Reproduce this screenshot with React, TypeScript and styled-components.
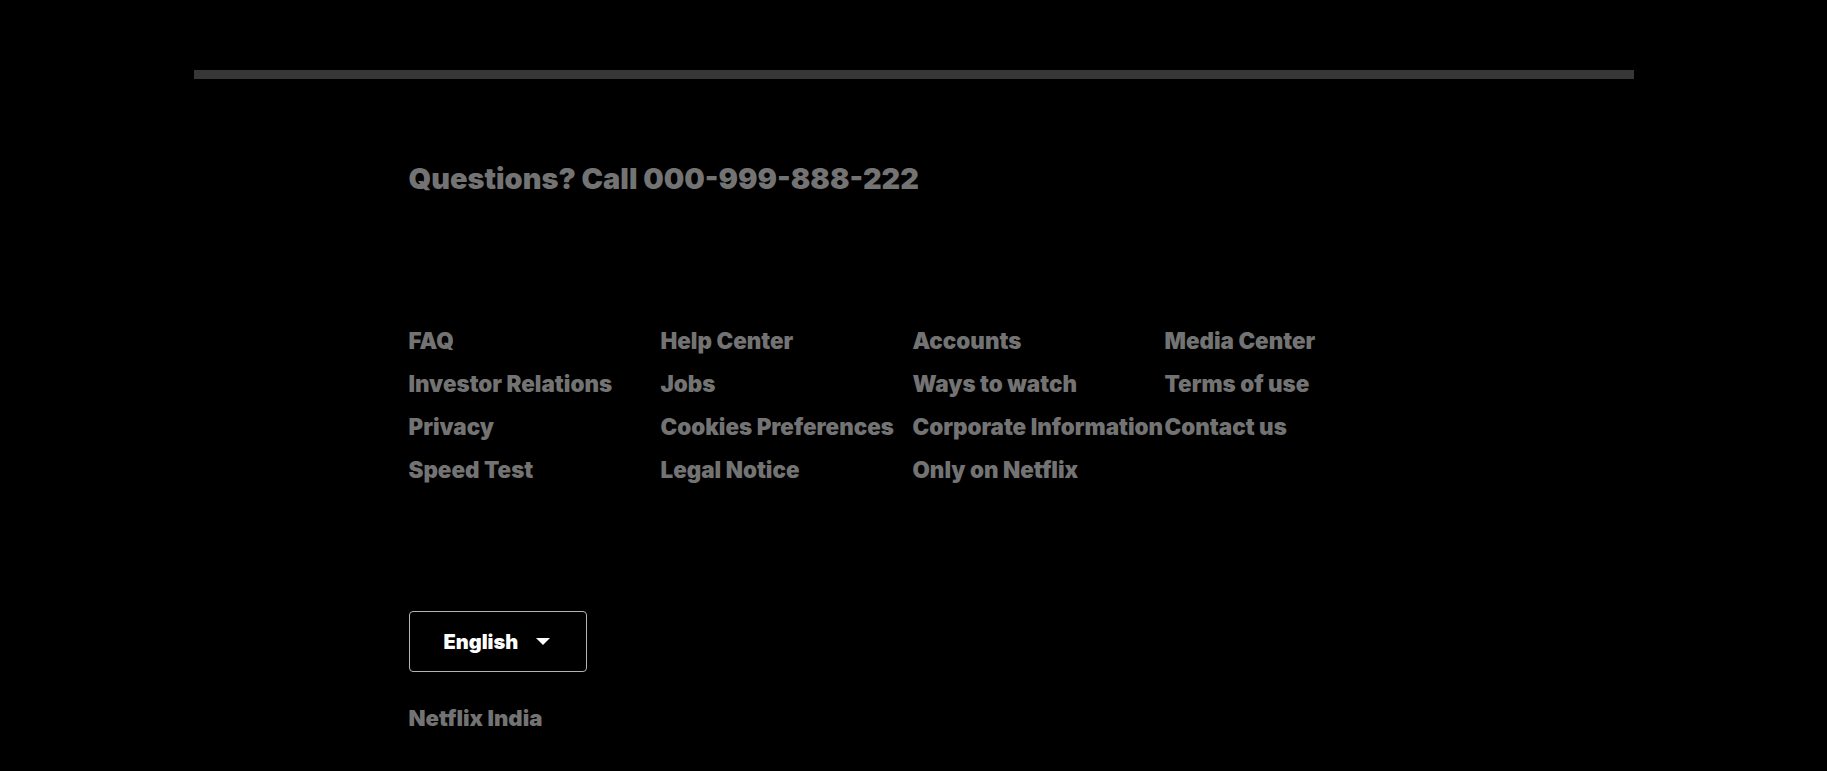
import React from "react";
import styled, { createGlobalStyle } from "styled-components";

const Global = createGlobalStyle`
  html, body {
    margin: 0;
    padding: 0;
    background: #000;
  }
  body {
    font-family: Inter, "Noto Sans", Arial, sans-serif;
    -webkit-font-smoothing: antialiased;
  }
`;

const Page = styled.div`
  box-sizing: border-box;
  background: #000;
  min-height: 771px;
  padding-top: 70px;
`;

const Divider = styled.hr`
  width: 1440px;
  height: 9px;
  margin: 0 auto;
  border: none;
  background: #373737;
`;

const Footer = styled.footer`
  width: 1010px;
  margin: 0 auto;
  padding-top: 83px;
  color: #737373;
`;

const Question = styled.p`
  margin: 0;
  font-size: 28.9px;
  font-weight: 900;
  line-height: 34px;
  color: #737373;
`;

const LinkGrid = styled.ul`
  list-style: none;
  margin: 132px 0 0;
  padding: 0;
  display: grid;
  grid-template-columns: repeat(4, 252px);
  row-gap: 18px;
`;

const LinkItem = styled.li`
  font-size: 22.4px;
  font-weight: 900;
  line-height: 25px;
  white-space: nowrap;
  min-width: 0;
`;

const FooterLink = styled.a`
  color: #737373;
  text-decoration: none;
`;

const LangButton = styled.button`
  margin-top: 129px;
  width: 178px;
  height: 61px;
  box-sizing: border-box;
  display: flex;
  align-items: center;
  padding: 0 0 0 34px;
  gap: 18px;
  background: #000;
  border: 1px solid #b3b3b3;
  border-radius: 4px;
  color: #fff;
  font-family: Inter, Arial, sans-serif;
  font-size: 20px;
  font-weight: 900;
  cursor: pointer;
`;

const Caret = styled.span`
  width: 0;
  height: 0;
  border-left: 7px solid transparent;
  border-right: 7px solid transparent;
  border-top: 7px solid #fff;
`;

const Country = styled.p`
  margin: 33px 0 0;
  font-size: 22.2px;
  font-weight: 900;
  line-height: 25px;
  color: #737373;
`;

const links = [
  "FAQ",
  "Help Center",
  "Accounts",
  "Media Center",
  "Investor Relations",
  "Jobs",
  "Ways to watch",
  "Terms of use",
  "Privacy",
  "Cookies Preferences",
  "Corporate Information",
  "Contact us",
  "Speed Test",
  "Legal Notice",
  "Only on Netflix",
];

export default function App() {
  return (
    <Page>
      <Global />
      <Divider />
      <Footer>
        <Question>Questions? Call 000-999-888-222</Question>
        <LinkGrid>
          {links.map((l) => (
            <LinkItem key={l}>
              <FooterLink href="#">{l}</FooterLink>
            </LinkItem>
          ))}
        </LinkGrid>
        <LangButton>
          English
          <Caret />
        </LangButton>
        <Country>Netflix India</Country>
      </Footer>
    </Page>
  );
}
